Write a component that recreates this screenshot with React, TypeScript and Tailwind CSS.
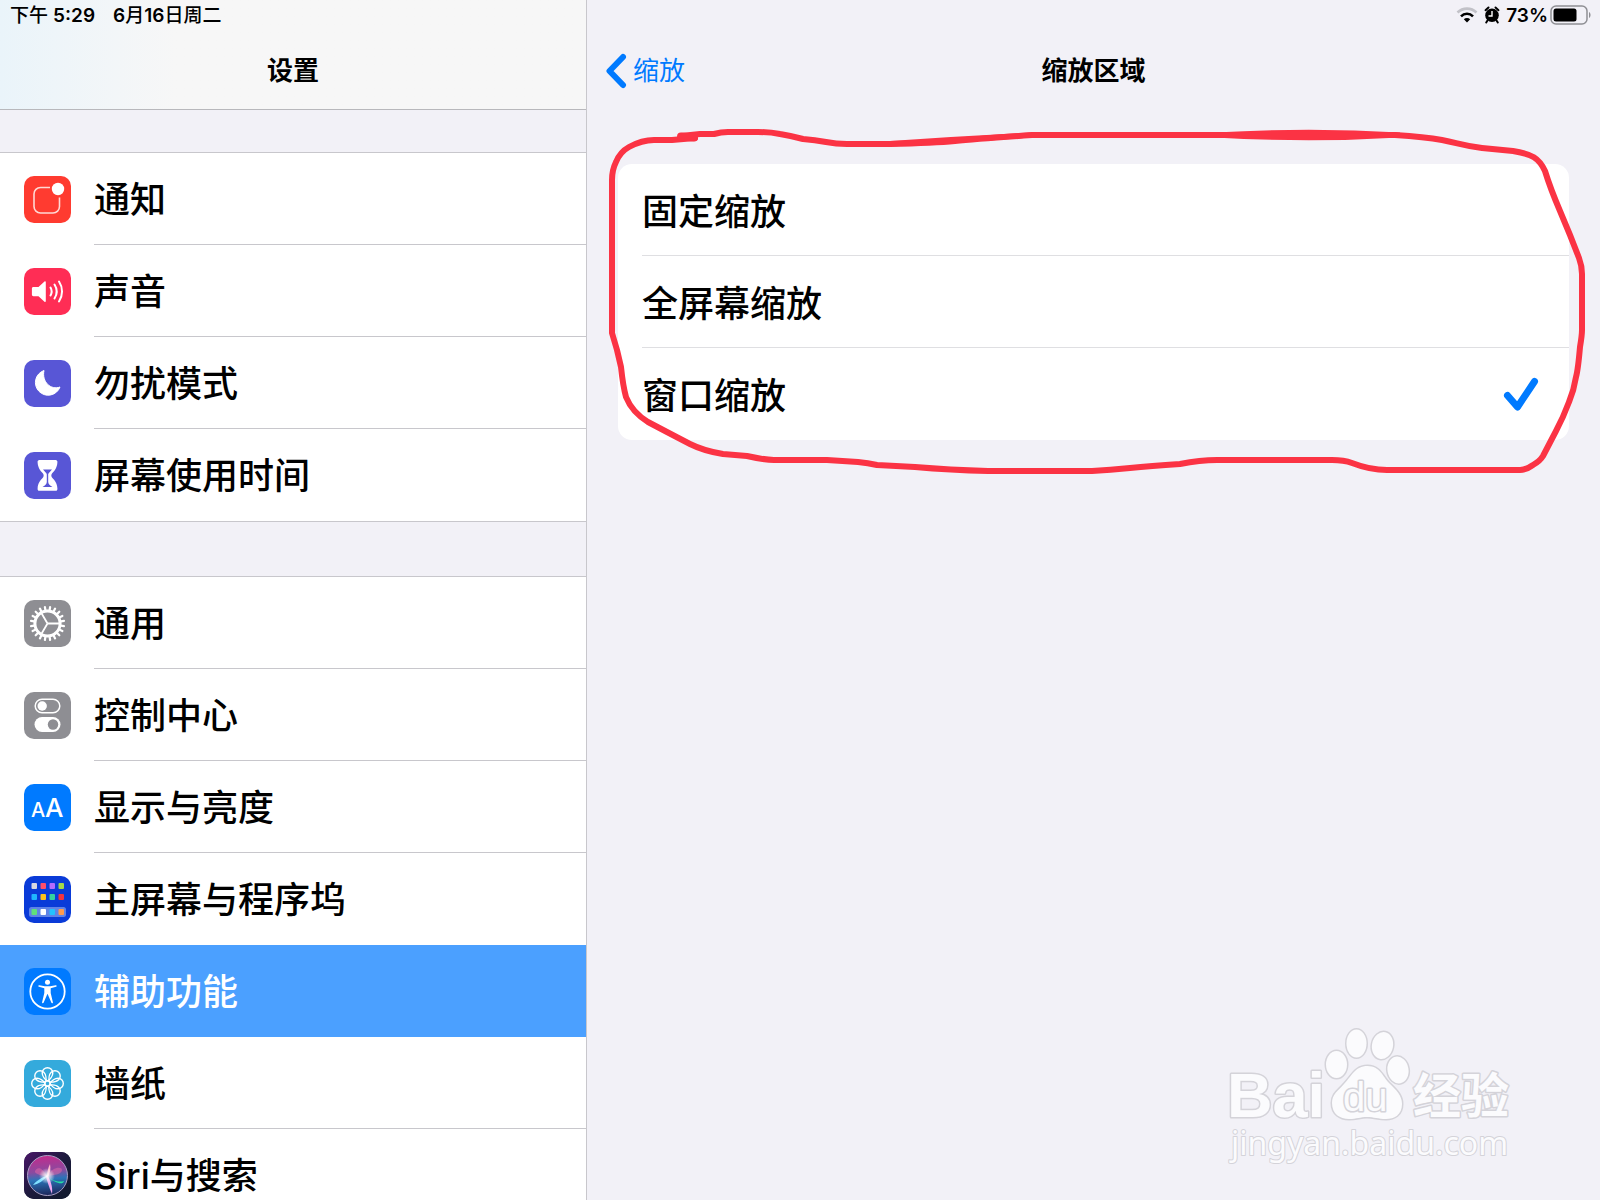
import { useState } from "react"
import type { ReactNode } from "react"

type SidebarItem = {
  label: string
  icon: ReactNode
  color: string
  active?: boolean
}

type SidebarGroupProps = {
  items: SidebarItem[]
}

const APP_DOTS = [
  ["#d8d8e0", "#ff4f6b", "#b56bff", "#a4d84a"],
  ["#1fb6ff", "#ffc21a", "#34d1a0", "#f5333f"],
]

const DOCK_DOTS = ["#5fe07a", "#ffffff", "#22c1ff", "#ff9a4a"]

const GEAR_TEETH = Array.from({ length: 20 }, (_, index) => index * 18)
const PETALS = Array.from({ length: 8 }, (_, index) => index * 45)

const NotificationIcon = () => (
  <svg viewBox="0 0 47 47" className="size-full" fill="none" aria-hidden="true">
    <path
      d="M26 11.5H16.5a6.5 6.5 0 0 0-6.5 6.5v12.5a6.5 6.5 0 0 0 6.5 6.5h12.5a6.5 6.5 0 0 0 6.5-6.5V21.5"
      stroke="#ffd9d4"
      strokeWidth="1.6"
    />
    <circle cx="34" cy="13" r="6.2" fill="#fff" />
  </svg>
)

const SoundIcon = () => (
  <svg viewBox="0 0 47 47" className="size-full" fill="none" aria-hidden="true">
    <path
      d="M9.5 19h5l6-5.500c.6-.5 1.300-.3 1.300.6v19c0 .9-.7 1.100-1.300.6l-6-5.500h-5c-1 0-1.600-.6-1.600-1.600v-6c0-1 .6-1.600 1.600-1.600z"
      fill="#fff"
    />
    <path
      d="M26.5 19.5a8 8 0 0 1 0 8M30.5 16.5a13 13 0 0 1 0 14M35 13.5a18 18 0 0 1 0 20"
      stroke="#fff"
      strokeWidth="2"
      strokeLinecap="round"
    />
  </svg>
)

const MoonIcon = () => (
  <svg viewBox="0 0 47 47" className="size-full" aria-hidden="true">
    <path d="M20 10.5A12.7 12.7 0 1 0 36 27C27 30.5 17.5 22 20 10.5z" fill="#fff" stroke="#fff" strokeLinejoin="round" />
  </svg>
)

const HourglassIcon = () => (
  <svg viewBox="0 0 47 47" className="size-full" fill="none" aria-hidden="true">
    <path
      d="M15.5 8h16c1.500 0 2 1 1.900 2.200-.3 5.500-2.400 8-5.400 11.300-.9 1-.9 3 0 4 3 3.300 5.100 5.500 5.400 11 .1 1.400-.4 2.300-1.900 2.300h-16c-1.500 0-2-.9-1.900-2.300.3-5.500 2.400-7.700 5.400-11 .9-1 .9-3 0-4-3-3.300-5.100-5.800-5.400-11.300C13.5 9 14 8 15.5 8z"
      fill="#fff"
    />
    <path
      d="M19 17.5h9l-3.300 3.800c-.5.600-.5 1-.5 2v6.500c0 2 1.300 3.600 4.300 5.200h-10c3-1.600 4.300-3.200 4.300-5.200v-6.500c0-1 0-1.400-.5-2z"
      fill="#5856d6"
    />
  </svg>
)

const GearIcon = () => (
  <svg viewBox="0 0 47 47" className="size-full" fill="none" stroke="#fff" aria-hidden="true">
    <circle cx="23.5" cy="23.5" r="12.6" strokeWidth="3" />
    {GEAR_TEETH.map((angle) => (
      <path
        key={angle}
        d="M23.5 10V6.8"
        strokeWidth="2.2"
        strokeLinecap="round"
        transform={`rotate(${angle + 9} 23.5 23.5)`}
      />
    ))}
    <path d="M23.5 23.5H36M23.5 23.5l-6.300-10.800M23.5 23.5l-6.300 10.800" strokeWidth="1.8" />
  </svg>
)

const ControlIcon = () => (
  <svg viewBox="0 0 47 47" className="size-full" fill="none" aria-hidden="true">
    <rect x="11.2" y="7.2" width="24.6" height="13.6" rx="6.8" stroke="#fff" strokeWidth="1.5" />
    <circle cx="18.2" cy="14" r="4.7" fill="#fff" />
    <rect x="10.5" y="25" width="26" height="15" rx="7.5" fill="#fff" />
    <circle cx="29" cy="32.5" r="5.2" fill="#8e8e93" />
  </svg>
)

const DisplayIcon = () => (
  <svg viewBox="0 0 47 47" className="size-full font-['Inter',sans-serif] font-medium" fill="#fff" aria-hidden="true">
    <text x="7" y="33" fontSize="20">A</text>
    <text x="21" y="33" fontSize="26">A</text>
  </svg>
)

const HomeScreenIcon = () => (
  <svg viewBox="0 0 47 47" className="size-full" aria-hidden="true">
    {APP_DOTS.map((row, y) =>
      row.map((color, x) => (
        <rect key={`${x}-${y}`} x={7.5 + x * 9} y={7 + y * 11} width="5.5" height="6" rx="1" fill={color} />
      )),
    )}
    <rect x="5" y="31" width="37" height="10" rx="2.5" fill="#5f83e6" />
    {DOCK_DOTS.map((color, x) => (
      <rect key={color} x={7.5 + x * 9} y="33" width="5.5" height="6" rx="1" fill={color} />
    ))}
  </svg>
)

const AccessibilityIcon = () => (
  <svg viewBox="0 0 47 47" className="size-full" fill="none" aria-hidden="true">
    <circle cx="23.5" cy="23.5" r="17.2" stroke="#fff" strokeWidth="1.8" />
    <circle cx="23.5" cy="14.3" r="2.5" fill="#fff" />
    <path
      d="M15.3 17.2l5.500 1.100h5.400l5.500-1.100c1.200-.2 1.400 1.200.3 1.500l-5.300 1.600v4.700l2.200 9.200c.2 1.100-1.200 1.500-1.600.4l-3.800-8.800-3.800 8.800c-.4 1.100-1.800.7-1.600-.4l2.200-9.200v-4.700L15 18.7c-1.100-.3-.9-1.700.3-1.500z"
      fill="#fff"
    />
  </svg>
)

const WallpaperIcon = () => (
  <svg viewBox="0 0 47 47" className="size-full" fill="none" stroke="#fff" strokeWidth="1.4" aria-hidden="true">
    {PETALS.map((angle) => (
      <path
        key={angle}
        d="M23.5 21c-2.500-1.500-5.300-5-5.300-8a5.300 5.300 0 0 1 10.600 0c0 3-2.800 6.500-5.300 8z"
        transform={`rotate(${angle} 23.5 23.5)`}
      />
    ))}
    <circle cx="23.5" cy="23.5" r="2.6" />
  </svg>
)

const SiriIcon = () => (
  <svg viewBox="0 0 47 47" className="size-full" fill="none" aria-hidden="true">
    <defs>
      <linearGradient id="siri-back" x1="0" y1="0" x2="1" y2="1">
        <stop offset="0" stopColor="#4a1668" />
        <stop offset="0.5" stopColor="#1c1a3c" />
        <stop offset="1" stopColor="#101a2c" />
      </linearGradient>
      <linearGradient id="siri-orb" x1="0.4" y1="0" x2="0.5" y2="1">
        <stop offset="0" stopColor="#c42b8c" />
        <stop offset="0.4" stopColor="#8a4aa0" />
        <stop offset="0.6" stopColor="#2b74b8" />
        <stop offset="1" stopColor="#1c2458" />
      </linearGradient>
      <radialGradient id="siri-glow">
        <stop offset="0" stopColor="#fff" />
        <stop offset="1" stopColor="#fff" stopOpacity="0" />
      </radialGradient>
    </defs>
    <rect width="47" height="47" fill="url(#siri-back)" />
    <circle cx="23.5" cy="23.5" r="20" fill="url(#siri-orb)" stroke="#a9a0c4" strokeWidth="1" />
    <path d="M23 24C16 12 12 17 11 19s5 5 12 5c8-1 15-2 15-6s-10-3-15 6z" fill="#e56aa8" fillOpacity="0.5" />
    <path d="M23 24c3 3 10 7 17 5-1 4-8 3-17-5z" fill="#26e0a4" />
    <path d="M23 24c-5 1-11 5-14 9 6-1 11-5 14-9z" fill="#7fe0ff" />
    <path d="M22 24c1 5 3 11 6 18 1-8-2-14-4-18z" fill="#f0a8f0" />
    <path d="M23 25c0-5 1-9 3-13 1 5 0 9-2 13z" fill="#ffb8cc" />
    <circle cx="23" cy="24" r="8" fill="url(#siri-glow)" />
  </svg>
)

const GENERAL_ITEMS: SidebarItem[] = [
  { label: "通知", icon: <NotificationIcon />, color: "bg-[#ff3b30]" },
  { label: "声音", icon: <SoundIcon />, color: "bg-[#ff2d55]" },
  { label: "勿扰模式", icon: <MoonIcon />, color: "bg-[#5856d6]" },
  { label: "屏幕使用时间", icon: <HourglassIcon />, color: "bg-[#5856d6]" },
]

const SYSTEM_ITEMS: SidebarItem[] = [
  { label: "通用", icon: <GearIcon />, color: "bg-[#8e8e93]" },
  { label: "控制中心", icon: <ControlIcon />, color: "bg-[#8e8e93]" },
  { label: "显示与亮度", icon: <DisplayIcon />, color: "bg-[#007aff]" },
  { label: "主屏幕与程序坞", icon: <HomeScreenIcon />, color: "bg-[#0a3bd8]" },
  { label: "辅助功能", icon: <AccessibilityIcon />, color: "bg-[#007aff]", active: true },
  { label: "墙纸", icon: <WallpaperIcon />, color: "bg-[#34aadc]" },
  { label: "Siri与搜索", icon: <SiriIcon />, color: "bg-[#1c1a3c]" },
]

const ZOOM_REGIONS = ["固定缩放", "全屏幕缩放", "窗口缩放"]

function SidebarGroup({ items }: SidebarGroupProps) {
  return (
    <ul className="shrink-0 border-y border-[#c8c7cc] bg-white">
      {items.map((item, index) => {
        const plain = item.active || items[index + 1]?.active || index === items.length - 1
        return (
          <li key={item.label}>
            <button
              type="button"
              className={`flex h-[92px] w-full items-center gap-[23px] pl-6 text-left ${item.active ? "bg-[#4ba0ff] text-white" : "text-black"}`}
            >
              <span className={`size-[47px] shrink-0 overflow-hidden rounded-[10px] ${item.color}`}>{item.icon}</span>
              <span
                className={`flex h-full flex-1 items-center border-b pt-0.5 text-[36px] leading-none ${plain ? "border-transparent" : "border-[#c8c7cc]"}`}
              >
                {item.label}
              </span>
            </button>
          </li>
        )
      })}
    </ul>
  )
}

function StatusIcons() {
  return (
    <div className="flex h-[30px] items-center justify-end gap-0.5 pr-2">
      <svg viewBox="0 0 22 16" className="mr-1 h-4 w-[22px]" fill="none" aria-hidden="true">
        <path d="M1.5 5.5a13.5 13.5 0 0 1 19 0" stroke="#c2c2c8" strokeWidth="2.6" />
        <path d="M5 9.3a8.5 8.5 0 0 1 12 0" stroke="#000" strokeWidth="2.6" />
        <path d="M11 15.5l-3.200-3.200a4.600 4.600 0 0 1 6.400 0z" fill="#000" />
      </svg>
      <svg viewBox="0 0 16 18" className="mr-1 h-[18px] w-4" fill="none" aria-hidden="true">
        <circle cx="8" cy="9.3" r="6.8" fill="#000" />
        <path
          d="M1.5 4.2l3-2.700M14.5 4.2l-3-2.700M3.5 14.5l-1.300 2M12.5 14.5l1.300 2"
          stroke="#000"
          strokeWidth="2"
          strokeLinecap="round"
        />
        <path d="M8 5v5H4.5" stroke="#fff" strokeWidth="1.4" />
      </svg>
      <span className="text-[19px] font-semibold leading-none">73%</span>
      <svg viewBox="0 0 42 20" className="h-5 w-[42px]" fill="none" aria-hidden="true">
        <rect x="1" y="1" width="36" height="18" rx="5" stroke="#8f8f94" strokeWidth="1.5" />
        <rect x="3.5" y="3.5" width="23" height="13" rx="2.5" fill="#000" />
        <path d="M39 7c2 1 2 5 0 6z" fill="#8f8f94" />
      </svg>
    </div>
  )
}

function RegionPicker() {
  const [selected, setSelected] = useState("窗口缩放")

  return (
    <fieldset className="mx-[31px] mt-14 overflow-hidden rounded-[14px] bg-white" aria-label="缩放区域">
      {ZOOM_REGIONS.map((region) => (
        <label
          key={region}
          className="group flex h-[92px] cursor-pointer items-center pl-6 text-[36px] leading-none"
        >
          <input
            type="radio"
            name="zoom-region"
            className="peer sr-only"
            checked={selected === region}
            onChange={() => setSelected(region)}
          />
          <span className="flex h-full flex-1 items-center border-b border-[#dfdfe2] pt-1 group-last:border-transparent">{region}</span>
          <svg
            viewBox="0 0 36 34"
            className="mr-[30px] -ml-[66px] hidden h-[34px] w-9 peer-checked:block"
            fill="none"
            stroke="#007aff"
            strokeWidth="7"
            strokeLinecap="round"
            strokeLinejoin="round"
            aria-hidden="true"
          >
            <path d="M4.5 18.5L14.5 30L31.5 4.500" />
          </svg>
        </label>
      ))}
    </fieldset>
  )
}

function MarkerStroke() {
  return (
    <svg
      viewBox="587 110 1013 380"
      className="pointer-events-none absolute inset-x-0 top-[110px] w-full"
      fill="none"
      stroke="#fb3344"
      strokeWidth="6"
      strokeLinecap="round"
      strokeLinejoin="round"
      aria-hidden="true"
    >
      <path d="M681 136L700 134H714Q721 132 728 132H758Q770 132 780 134Q792 136 803 139Q815 140 826 142Q836 144 847 144H890Q935 143 955 141T1032 135H1395Q1425 137 1442 140C1458 143 1464 146 1482 148L1513 151C1532 154 1539 158 1545 171C1549 184 1554 197 1560 211L1570 235L1579 258Q1582 266 1582 274V330Q1582 335 1580 347Q1578 370 1576 377Q1574 390 1569 402Q1563 418 1556 431L1543 456Q1540 461 1533 465Q1526 470 1520 470H1387Q1370 470 1352 463Q1344 460 1332 460H1217Q1200 460 1180 464Q1150 466 1130 468T1092 471H988Q950 470 915 467L877 465Q868 463 858 462L827 460H774Q765 460 747 456L723 454Q704 451 690 444L667 432L648 422Q632 412 626 397Q623 386 621 367L617 350L612 333V180Q612 170 616 162Q620 152 629 147Q642 140 654 140H672L695 138" />
      <path d="M681 136.5L694 137.5" strokeWidth="8" />
      <path
        d="M890 141Q960 136 1032 132.5V137.5Q960 143 890 146.5zM1215 132.5Q1310 127 1400 132.5V137.5Q1310 143 1215 137.5z"
        fill="#fb3344"
        stroke="none"
      />
    </svg>
  )
}

function Watermark() {
  return (
    <svg
      viewBox="1220 1020 300 150"
      className="pointer-events-none absolute right-20 bottom-[30px] w-[300px]"
      fill="#fbfbfd"
      stroke="#d4d3d9"
      strokeWidth="3"
      strokeLinejoin="round"
      paintOrder="stroke"
      aria-hidden="true"
    >
      <text x="1227" y="1117" fontSize="63" className="font-['Liberation_Sans',sans-serif] font-bold">Bai</text>
      <ellipse cx="1336.5" cy="1064.5" rx="10.5" ry="13.5" />
      <ellipse cx="1356.5" cy="1043.5" rx="10" ry="14" />
      <ellipse cx="1382.5" cy="1045.5" rx="10.5" ry="13.5" transform="rotate(12 1382.5 1045.5)" />
      <ellipse cx="1398" cy="1070" rx="10.5" ry="13.5" transform="rotate(-10 1398 1070)" />
      <path d="M1367.5 1066C1380 1066 1383 1077 1389 1083C1396 1090 1402 1095 1402 1104C1402 1115 1394 1119 1386 1119C1378 1119 1374 1117 1367 1117C1360 1117 1357 1119 1349 1119C1340 1119 1332 1114 1332 1103C1332 1094 1338 1091 1344 1084C1352 1076 1355 1066 1367.5 1066z" />
      <text x="1343" y="1111" fontSize="40" className="font-['Liberation_Sans',sans-serif]">du</text>
      <text x="1413" y="1113" fontSize="48" className="font-['Noto_Sans_CJK_SC',sans-serif] font-bold">经验</text>
      <text x="1231" y="1155" fontSize="32" strokeWidth="2" className="font-['Noto_Sans',sans-serif] font-normal">jingyan.baidu.com</text>
    </svg>
  )
}

export default function App() {
  return (
    <div className="flex h-screen overflow-hidden bg-[#f2f1f7] font-['Inter','Noto_Sans_CJK_SC',sans-serif] font-medium text-black">
      <aside className="flex w-[587px] shrink-0 flex-col overflow-hidden border-r border-[#c8c7cc]">
        <header className="h-[110px] shrink-0 border-b border-[#b8b8bc] bg-[#f7f7f7] bg-linear-to-r from-[#eaf4fa] to-[#f7f7f7] to-30%">
          <p className="flex h-[30px] items-center gap-[18px] pl-[10px] text-[19px] leading-none">
            <span>
              下午 <b className="font-semibold">5:29</b>
            </span>
            <span>
              <b className="font-semibold">6</b>月<b className="font-semibold">16</b>日周二
            </span>
          </p>
          <h1 className="flex h-[78px] items-center justify-center pt-1 text-[26px] font-bold leading-none">设置</h1>
        </header>
        <nav className="flex flex-col gap-[54px] pt-[42px]" aria-label="设置">
          <SidebarGroup items={GENERAL_ITEMS} />
          <SidebarGroup items={SYSTEM_ITEMS} />
        </nav>
      </aside>
      <main className="relative flex-1">
        <StatusIcons />
        <header className="grid h-[78px] grid-cols-3 items-center pt-1 text-[26px] leading-none">
          <button type="button" className="flex items-center gap-1.5 pl-[18px] font-normal text-[#007aff]">
            <svg
              viewBox="0 0 22 36"
              className="h-9 w-[22px]"
              fill="none"
              stroke="currentColor"
              strokeWidth="6"
              strokeLinecap="round"
              strokeLinejoin="round"
              aria-hidden="true"
            >
              <path d="M18 4L4.5 18L18 32" />
            </svg>
            缩放
          </button>
          <h2 className="text-center font-bold">缩放区域</h2>
        </header>
        <RegionPicker />
        <MarkerStroke />
        <Watermark />
      </main>
    </div>
  )
}
